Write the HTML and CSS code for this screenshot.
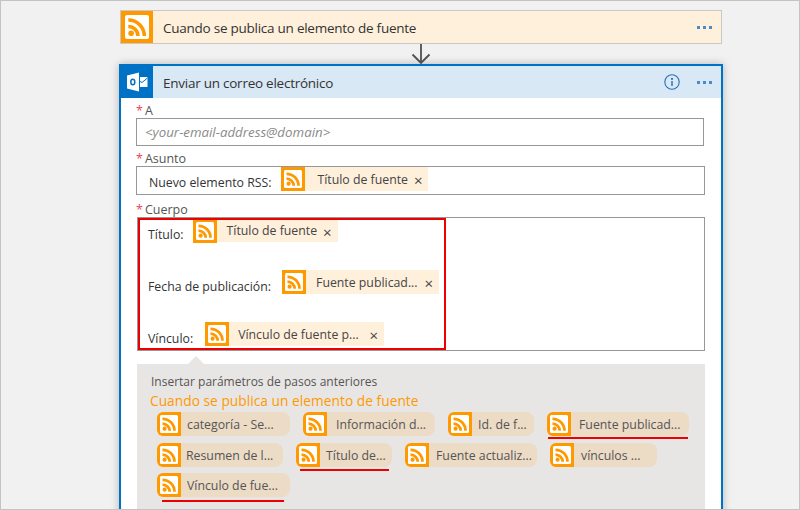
FILE: index.html

```html
<!DOCTYPE html>
<html lang="es">
<head>
    <meta charset="UTF-8">
    <title>Enviar un correo electrónico</title>
    <link rel="stylesheet" href="styles.css">
</head>
<body>
    <svg class="defs" width="0" height="0">
        <symbol id="rss" viewBox="0 0 24 24">
            <rect width="24" height="24" fill="#ff9900"/>
            <rect x="3" y="3" width="18" height="18" rx="1.5" fill="#fff"/>
            <circle cx="7.600" cy="16.700" r="2.100" fill="#ff9900"/>
            <path d="M5.500 11.600a7.200 7.200 0 0 1 7.200 7.200M5.500 6.800a12 12 0 0 1 12 12" fill="none" stroke="#ff9900" stroke-width="2.700"/>
        </symbol>
    </svg>
    <div class="page">
        <div class="trigger">
            <svg class="icon-big"><use href="#rss"/></svg>
            <span class="card-title">Cuando se publica un elemento de fuente</span>
            <span class="dots"><i></i><i></i><i></i></span>
        </div>
        <svg class="arrow" width="20" height="20" viewBox="0 0 20 20">
            <path d="M10 0v18.500M1.500 10.500l8.500 8.500 8.500-8.500" fill="none" stroke="#505050" stroke-width="1.800"/>
        </svg>
        <div class="action">
            <div class="action-head">
                <div class="outlook">
                    <svg width="22" height="22" viewBox="0 0 22 22">
                        <path d="M1 4.500 13 1.500v19L1 17.500z" fill="#fff"/>
                        <path d="M14 6h7.500v10H14z" fill="#fff"/>
                        <path d="M14 10.500l2 1 5.500-4.500" fill="none" stroke="#0072c6" stroke-width="1"/>
                        <ellipse cx="6.800" cy="11" rx="2" ry="2.800" fill="none" stroke="#0072c6" stroke-width="1.500"/>
                    </svg>
                </div>
                <span class="card-title">Enviar un correo electrónico</span>
                <svg class="info" width="16" height="16" viewBox="0 0 16 16">
                    <circle cx="8" cy="8" r="7.200" fill="none" stroke="#2a6fb8" stroke-width="1.100"/>
                    <path d="M8 7v5" stroke="#5a8fc8" stroke-width="2"/>
                    <path d="M8 4v1.800" stroke="#2a6fb8" stroke-width="2"/>
                </svg>
                <span class="dots"><i></i><i></i><i></i></span>
            </div>
            <div class="form">
                <div class="label"><b>*</b><span>A</span></div>
                <div class="input placeholder">&lt;your-email-address@domain&gt;</div>
                <div class="label label-asunto"><b>*</b><span>Asunto</span></div>
                <div class="input input-asunto">
                    <span class="text">Nuevo elemento RSS:</span>
                    <span class="token"><svg class="icon-small"><use href="#rss"/></svg><span class="token-text">Título de fuente</span><span class="close">×</span></span>
                </div>
                <div class="label label-cuerpo"><b>*</b><span>Cuerpo</span></div>
                <div class="body-box">
                    <div class="highlight"></div>
                    <div class="body-row row-titulo">
                        <span class="text">Título:</span>
                        <span class="token"><svg class="icon-small"><use href="#rss"/></svg><span class="token-text">Título de fuente</span><span class="close">×</span></span>
                    </div>
                    <div class="body-row row-fecha">
                        <span class="text">Fecha de publicación:</span>
                        <span class="token"><svg class="icon-small"><use href="#rss"/></svg><span class="token-text">Fuente publicad...</span><span class="close">×</span></span>
                    </div>
                    <div class="body-row row-vinculo">
                        <span class="text">Vínculo:</span>
                        <span class="token"><svg class="icon-small"><use href="#rss"/></svg><span class="token-text">Vínculo de fuente p...</span><span class="close">×</span></span>
                    </div>
                </div>
                <div class="panel">
                    <div class="panel-title">Insertar parámetros de pasos anteriores</div>
                    <div class="panel-sub">Cuando se publica un elemento de fuente</div>
                    <div class="chips">
                        <span class="chip w133"><svg class="icon-small"><use href="#rss"/></svg>categoría - Se...</span>
                        <span class="chip w132 gap9"><svg class="icon-small"><use href="#rss"/></svg>Información d...</span>
                        <span class="chip w86"><svg class="icon-small"><use href="#rss"/></svg>Id. de f...</span>
                        <span class="chip w142 gap8 mark-a"><svg class="icon-small"><use href="#rss"/></svg>Fuente publicad...</span>
                        <span class="chip w126 gap5"><svg class="icon-small"><use href="#rss"/></svg>Resumen de l...</span>
                        <span class="chip w96 mark-b"><svg class="icon-small"><use href="#rss"/></svg>Título de...</span>
                        <span class="chip w132 gap7"><svg class="icon-small"><use href="#rss"/></svg>Fuente actualiz...</span>
                        <span class="chip w107 gap7"><svg class="icon-small"><use href="#rss"/></svg>vínculos ...</span>
                        <span class="chip w133 mark-c"><svg class="icon-small"><use href="#rss"/></svg>Vínculo de fue...</span>
                    </div>
                </div>
            </div>
        </div>
    </div>
</body>
</html>
```

FILE: styles.css

```css
* {
    box-sizing: border-box;
}

html, body {
    margin: 0;
    height: 510px;
    overflow: hidden;
}

body {
    font-family: "Open Sans", "Noto Sans", sans-serif;
    color: #333;
}

.defs {
    position: absolute;
}

.page {
    width: 800px;
    height: 510px;
    overflow: hidden;
    background: #f1f1f1;
    border: 1px solid #c4c4c4;
    padding: 9px 0 0 118px;
}

.trigger {
    width: 602px;
    height: 34px;
    margin-left: 1px;
    display: flex;
    align-items: center;
    background: #fff0dc;
    border: 1px solid #c8c8c8;
}

.icon-big {
    width: 32px;
    height: 32px;
    flex: none;
}

.icon-small {
    width: 24px;
    height: 24px;
    flex: none;
}

.card-title {
    margin-left: 10px;
    padding-top: 2px;
    font-size: 13.5px;
    letter-spacing: -0.25px;
    flex: 1;
}

.dots {
    display: flex;
    gap: 3px;
    margin-right: 9px;
}

.dots i {
    width: 3px;
    height: 3px;
    background: #4a8ccb;
}

.arrow {
    display: block;
    margin-left: 292px;
}

.action {
    width: 604px;
    height: 460px;
    background: #fff;
    border: 2px solid #0072c6;
    box-shadow: 0 0 8px rgba(0, 0, 0, 0.25);
}

.action-head {
    height: 32px;
    display: flex;
    align-items: center;
    background: #d9e8f5;
}

.outlook {
    width: 32px;
    height: 32px;
    flex: none;
    display: flex;
    align-items: center;
    justify-content: center;
    background: #0072c6;
}

.info {
    margin-right: 17px;
}

.form {
    padding: 3px 0 0 15px;
}

.label {
    display: flex;
    gap: 2px;
    height: 17px;
    font-size: 12.5px;
    line-height: 19px;
    color: #555;
}

.label b {
    color: #e8485a;
    font-weight: 400;
}

.label-asunto {
    margin-top: 4px;
    height: 16px;
    line-height: 18px;
}

.label-cuerpo {
    margin-top: 5px;
}

.input {
    width: 568px;
    height: 28px;
    display: flex;
    align-items: center;
    border: 1px solid #979797;
    font-size: 12px;
}

.placeholder {
    padding-left: 8px;
    font-size: 13.3px;
    font-style: italic;
    color: #8a8a8a;
}

.input-asunto {
    width: 569px;
    height: 29px;
    padding-left: 12px;
    align-items: flex-start;
}

.input-asunto .text {
    margin-top: 7px;
}

.input-asunto .token {
    width: 147px;
    margin-left: 10px;
}

.text {
    font-size: 12.3px;
    color: #333;
}

.token {
    display: inline-flex;
    align-items: center;
    height: 24px;
    background: #fff0dc;
    font-size: 12.3px;
    color: #444;
}

.token-text {
    margin-left: 12px;
    white-space: nowrap;
}

.close {
    margin: 2px 6px 0 auto;
    font-size: 15px;
    line-height: 14px;
}

.body-box {
    position: relative;
    width: 568px;
    height: 134px;
    margin-left: 1px;
    border: 1px solid #979797;
    padding-left: 10px;
}

.highlight {
    position: absolute;
    left: 0;
    top: 0;
    width: 308px;
    height: 132px;
    border: 2px solid #ee0000;
}

.body-row {
    display: flex;
    align-items: flex-end;
}

.body-row .text {
    margin-bottom: -1px;
}

.row-titulo {
    margin-top: 2px;
    height: 24px;
    align-items: flex-start;
}

.row-titulo .text {
    margin: 6px 0 0;
}

.row-titulo .token {
    width: 145px;
    height: 22px;
    margin-left: 9px;
}

.row-titulo .token-text {
    margin: 0 0 1px 10px;
}

.row-fecha {
    margin-top: 26px;
    height: 24px;
}

.row-fecha .token {
    width: 157px;
    margin-left: 11px;
}

.row-fecha .token-text {
    margin-left: 10px;
}

.row-vinculo {
    margin-top: 28px;
    height: 24px;
}

.row-vinculo .token {
    width: 179px;
    margin-left: 12px;
}

.row-vinculo .token-text {
    margin-left: 9px;
}

.panel {
    position: relative;
    width: 568px;
    height: 146px;
    margin: 13px 0 0 1px;
    padding: 9px 0 0 14px;
    background: #e8e6e4;
}

.panel::before {
    content: "";
    position: absolute;
    left: 51px;
    top: -8px;
    border-left: 8px solid transparent;
    border-right: 8px solid transparent;
    border-bottom: 8px solid #e8e6e4;
}

.panel-title {
    height: 18px;
    font-size: 12px;
    line-height: 18px;
    color: #555;
}

.panel-sub {
    height: 21px;
    margin-left: -1px;
    font-size: 13.7px;
    font-weight: 500;
    letter-spacing: 0.05px;
    line-height: 20px;
    color: #ff9900;
}

.chips {
    display: flex;
    flex-wrap: wrap;
    gap: 7px 13px;
    margin-left: 6px;
}

.chip {
    position: relative;
    display: flex;
    align-items: center;
    gap: 6px;
    height: 24px;
    border-radius: 8px;
    background: #ecdbc5;
    font-size: 12.3px;
    white-space: nowrap;
    color: #555;
}

.chip .icon-small {
    border-radius: 6px 0 0 6px;
}

.chip.mark-c {
    margin-top: -1px;
}

.gap5 { gap: 5px; }
.gap7 { gap: 7px; }
.gap8 { gap: 8px; }
.gap9 { gap: 9px; }

/* red underlines drawn over the screenshot */
.mark-a::after,
.mark-b::after,
.mark-c::after {
    content: "";
    position: absolute;
    height: 2px;
    background: #ee0000;
}

.mark-a::after {
    left: 1px;
    right: 1px;
    bottom: -3px;
}

.mark-b::after {
    left: 4px;
    right: 3px;
    bottom: -4px;
}

.mark-c::after {
    left: 5px;
    right: 6px;
    bottom: -5px;
}

.w133 { width: 133px; }
.w132 { width: 132px; }
.w86 { width: 86px; }
.w142 { width: 142px; }
.w126 { width: 126px; }
.w96 { width: 96px; }
.w107 { width: 107px; }
```
